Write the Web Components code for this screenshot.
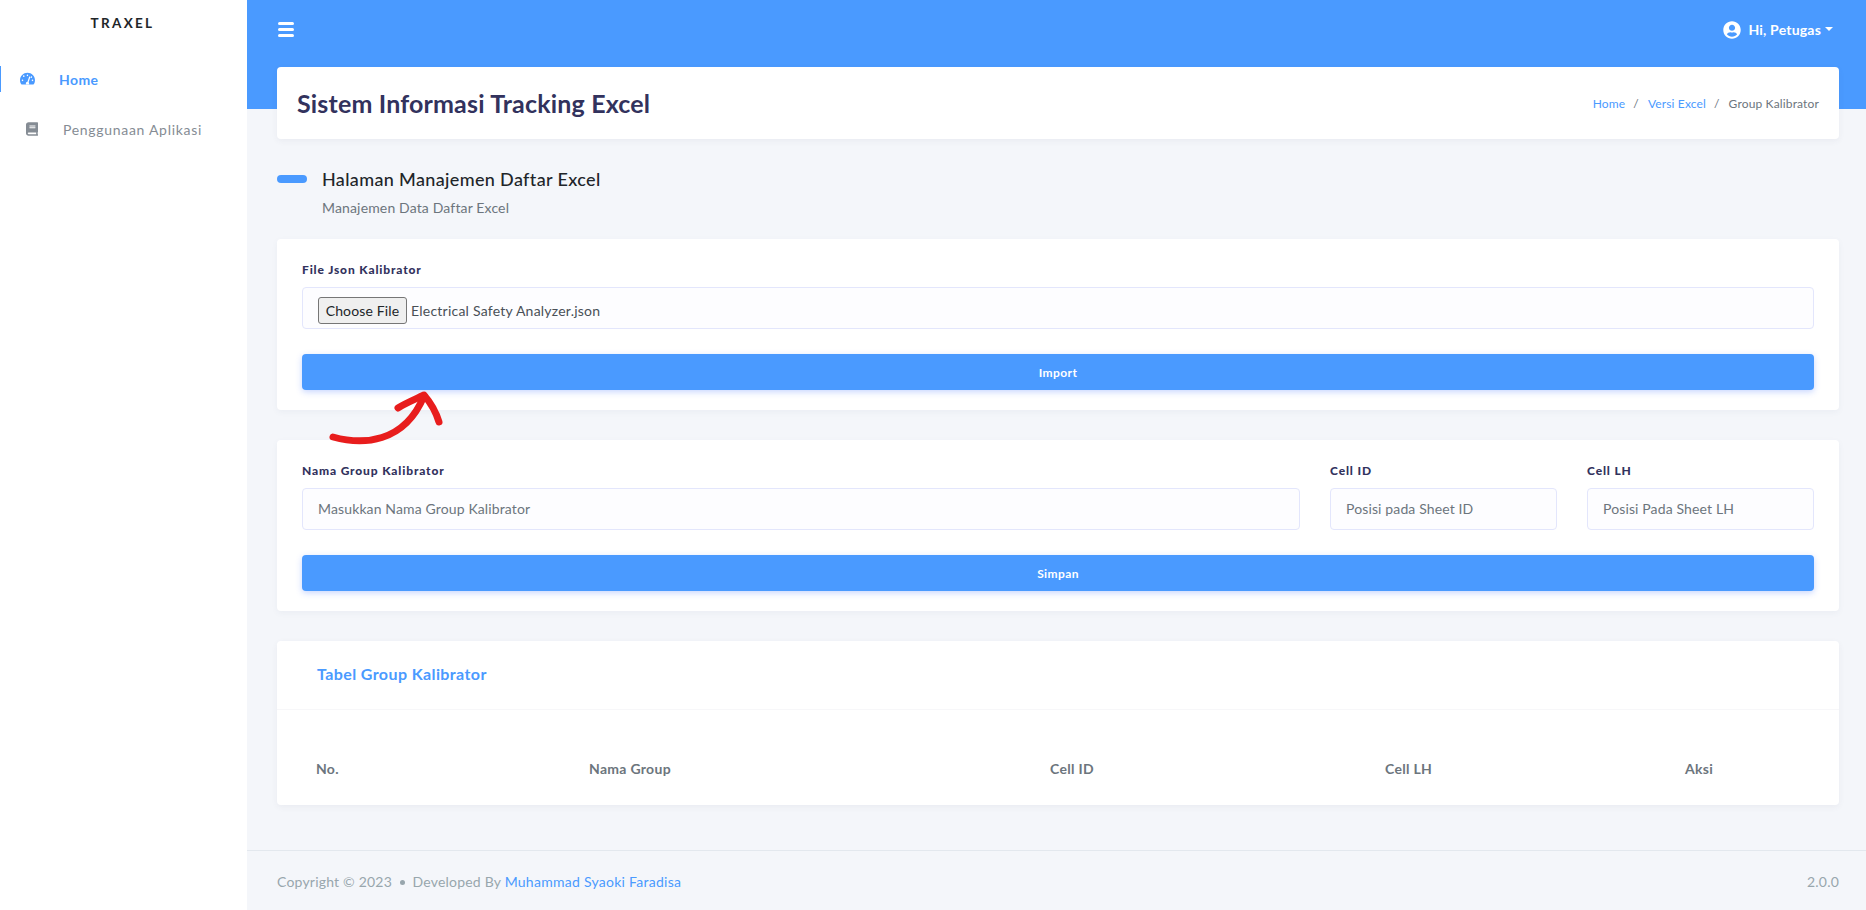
<!DOCTYPE html>
<html lang="id">
<head>
<meta charset="utf-8">
<title>Traxel</title>
<style>
  html, body { margin: 0; height: 100%; }
  body { background: #f4f6fa; font-family: "Lato", "Noto Sans", sans-serif; font-size: 14px; color: #6c757d; overflow: hidden; }
  #shell { display: flex; height: 910px; position: relative; }
  #main { flex: 1; display: flex; flex-direction: column; min-width: 0; }
  #content { flex: 1; padding: 0 27px 0 30px; display: flex; flex-direction: column; }
</style>
</head>
<body>
<div id="shell">
  <app-sidebar>
    <nav-item active label="Home" icon="gauge"></nav-item>
    <nav-item label="Penggunaan Aplikasi" icon="book"></nav-item>
  </app-sidebar>
  <div id="main">
    <app-topbar user="Hi, Petugas"></app-topbar>
    <div id="content">
      <page-title heading="Sistem Informasi Tracking Excel">
        <a slot="crumbs">Home</a>
        <a slot="crumbs">Versi Excel</a>
        <span slot="crumbs">Group Kalibrator</span>
      </page-title>
      <section-heading heading="Halaman Manajemen Daftar Excel" sub="Manajemen Data Daftar Excel"></section-heading>
      <ui-card>
        <form-field label="File Json Kalibrator" type="file" value="Electrical Safety Analyzer.json"></form-field>
        <ui-button>Import</ui-button>
      </ui-card>
      <ui-card class="second">
        <form-row>
          <form-field label="Nama Group Kalibrator" placeholder="Masukkan Nama Group Kalibrator"></form-field>
          <form-field label="Cell ID" placeholder="Posisi pada Sheet ID"></form-field>
          <form-field label="Cell LH" placeholder="Posisi Pada Sheet LH"></form-field>
        </form-row>
        <ui-button>Simpan</ui-button>
      </ui-card>
      <data-table heading="Tabel Group Kalibrator" columns="No.|Nama Group|Cell ID|Cell LH|Aksi"></data-table>
    </div>
    <app-footer version="2.0.0"></app-footer>
  </div>
  <hand-arrow></hand-arrow>
</div>

<script>
  const ICONS = {
    gauge: '<svg width="15" height="13.33" viewBox="0 0 576 512"><path fill="currentColor" d="M288 32C129 32 0 161 0 320c0 53 14 102 39 145 6 9 16 15 27 15h444c11 0 21-6 27-15 25-43 39-92 39-145C576 161 447 32 288 32zm0 64c15 0 26 10 31 23-2 3-4 6-5 9l-9 28c-5 3-11 4-17 4-18 0-32-14-32-32s14-32 32-32zM96 352c-18 0-32-14-32-32s14-32 32-32 32 14 32 32-14 32-32 32zm48-160c-18 0-32-14-32-32s14-32 32-32 32 14 32 32-14 32-32 32zm247 16-61 184c14 12 22 29 22 48 0 12-3 22-9 32H233c-6-10-9-20-9-32 0-35 28-64 63-64l61-184c4-13 18-19 30-15 13 4 20 18 16 31zm14 8 16-47c5-3 11-5 17-5 18 0 32 14 32 32s-14 32-32 32c-14 0-28-5-33-12zm75 136c-18 0-32-14-32-32s14-32 32-32 32 14 32 32-14 32-32 32z"/></svg>',
    book: '<svg width="12" height="14" viewBox="0 0 448 512"><path fill="currentColor" d="M448 360V24c0-13-11-24-24-24H96C43 0 0 43 0 96v320c0 53 43 96 96 96h328c13 0 24-11 24-24v-16c0-8-3-14-9-19-4-15-4-59 0-73 6-5 9-12 9-20zM128 134c0-3 3-6 6-6h212c3 0 6 3 6 6v20c0 3-3 6-6 6H134c-3 0-6-3-6-6v-20zm0 64c0-3 3-6 6-6h212c3 0 6 3 6 6v20c0 3-3 6-6 6H134c-3 0-6-3-6-6v-20zm253 250H96c-18 0-32-14-32-32s14-32 32-32h285c-2 17-2 47 0 64z"/></svg>',
    user: '<svg width="18" height="18" viewBox="0 0 496 512"><path fill="currentColor" d="M248 8C111 8 0 119 0 256s111 248 248 248 248-111 248-248S385 8 248 8zm0 96c49 0 88 39 88 88s-39 88-88 88-88-39-88-88 39-88 88-88zm0 344c-59 0-111-27-146-69 19-36 56-61 98-61 2 0 5 0 7 1 13 4 26 6 41 6s28-2 41-6c2-1 5-1 7-1 42 0 79 25 98 61-35 42-87 69-146 69z"/></svg>'
  };

  class AppSidebar extends HTMLElement {
    constructor() {
      super();
      this.attachShadow({mode:'open'});
      this.shadowRoot.innerHTML = `<style>
        :host { display: block; width: 247px; flex: none; background: #fff; }
        .brand { height: 46px; display: flex; align-items: center; justify-content: center; font-weight: 700; font-size: 13.5px; letter-spacing: 2.3px; color: #212529; padding-right: 2px; }
        nav { display: flex; flex-direction: column; gap: 24px; padding-top: 20px; }
      </style>
      <div class="brand">TRAXEL</div>
      <nav><slot></slot></nav>`;
    }
  }

  class NavItem extends HTMLElement {
    constructor() {
      super();
      this.attachShadow({mode:'open'});
      const active = this.hasAttribute('active');
      this.shadowRoot.innerHTML = `<style>
        :host { display: flex; align-items: center; height: 26px; color: #858c94; font-size: 14px; letter-spacing: .7px; border-left: 1px solid transparent; }
        :host([active]) { color: #4a9aff; border-left-color: #4a9aff; font-weight: 700; letter-spacing: .4px; }
        .ic { width: ${active ? 58 : 62}px; padding-left: ${active ? 19 : 25}px; box-sizing: border-box; display: flex; flex: none; }
      </style>
      <span class="ic">${ICONS[this.getAttribute('icon')]}</span><span>${this.getAttribute('label')}</span>`;
    }
  }

  class AppTopbar extends HTMLElement {
    constructor() {
      super();
      this.attachShadow({mode:'open'});
      this.shadowRoot.innerHTML = `<style>
        :host { display: flex; height: 109px; margin-bottom: -42px; background: #4a9aff; color: #fff; flex: none; box-sizing: border-box; padding: 0 33px 50px 31px; align-items: center; justify-content: space-between; }
        .bars { display: flex; flex-direction: column; gap: 3px; width: 16px; }
        .bars i { display: block; height: 3px; border-radius: 1.5px; background: #fff; }
        .user { display: flex; align-items: center; gap: 7px; font-weight: 700; font-size: 14px; letter-spacing: .2px; }
        .user svg { display: block; }
        .caret { width: 0; height: 0; border: 4px solid transparent; border-top-color: #fff; border-bottom: 0; margin-left: -3px; margin-top: -1px; }
      </style>
      <div class="bars"><i></i><i></i><i></i></div>
      <div class="user">${ICONS.user}<span>${this.getAttribute('user')}</span><span class="caret"></span></div>`;
    }
  }

  class PageTitle extends HTMLElement {
    constructor() {
      super();
      this.attachShadow({mode:'open'});
      this.shadowRoot.innerHTML = `<style>
        :host { display: flex; position: relative; height: 72px; flex: none; box-sizing: border-box; padding: 0 20px; align-items: center; justify-content: space-between; background: #fff; border-radius: 4px; box-shadow: 0 2px 6px rgba(60,70,110,.06); }
        h1 { margin: 0; font-size: 25px; font-weight: 700; color: #32325d; letter-spacing: .17px; }
        .crumbs { display: flex; font-size: 12px; color: #6c757d; letter-spacing: .15px; }
        ::slotted(a) { color: #4a9aff; }
        ::slotted(a)::after { content: "/"; color: #6c757d; padding: 0 9px 0 8px; }
      </style>
      <h1>${this.getAttribute('heading')}</h1>
      <div class="crumbs"><slot name="crumbs"></slot></div>`;
    }
  }

  class SectionHeading extends HTMLElement {
    constructor() {
      super();
      this.attachShadow({mode:'open'});
      this.shadowRoot.innerHTML = `<style>
        :host { display: grid; grid-template-columns: 30px 1fr; column-gap: 15px; align-items: center; flex: none; height: 100px; padding-top: 28px; box-sizing: border-box; align-content: start; row-gap: 7px; }
        .pill { height: 8px; border-radius: 4px; background: #4a9aff; }
        h2 { margin: 0; font-size: 18px; font-weight: 500; color: #212529; line-height: 24px; letter-spacing: .35px; }
        p { margin: 0; grid-column: 2; font-size: 14px; color: #6c757d; line-height: 20px; letter-spacing: .15px; }
      </style>
      <span class="pill"></span><h2>${this.getAttribute('heading')}</h2><p>${this.getAttribute('sub')}</p>`;
    }
  }

  class UiCard extends HTMLElement {
    constructor() {
      super();
      this.attachShadow({mode:'open'});
      this.shadowRoot.innerHTML = `<style>
        :host { display: flex; flex-direction: column; gap: 25px; flex: none; height: 171px; box-sizing: border-box; padding: 21px 25px 20px; background: #fff; border-radius: 4px; box-shadow: 0 2px 6px rgba(60,70,110,.05); }
        :host(.second) { margin-top: 30px; }
      </style><slot></slot>`;
    }
  }

  class FormRow extends HTMLElement {
    constructor() {
      super();
      this.attachShadow({mode:'open'});
      this.shadowRoot.innerHTML = `<style>
        :host { display: grid; grid-template-columns: 1fr 227px 227px; column-gap: 30px; }
      </style><slot></slot>`;
    }
  }

  class FormField extends HTMLElement {
    constructor() {
      super();
      this.attachShadow({mode:'open'});
      const isFile = this.getAttribute('type') === 'file';
      const body = isFile
        ? `<button type="button">Choose File</button><span class="val">${this.getAttribute('value')}</span>`
        : `<span class="ph">${this.getAttribute('placeholder')}</span>`;
      this.shadowRoot.innerHTML = `<style>
        :host { display: flex; flex-direction: column; gap: 7px; min-width: 0; }
        label { font-size: 12px; font-weight: 900; color: #32325d; line-height: 20px; letter-spacing: .85px; height: 20px; }
        .box { display: flex; align-items: center; height: 42px; box-sizing: border-box; padding: 0 15px; background: #fdfdff; border: 1px solid #e3e6fc; border-radius: 4px; font-size: 14px; letter-spacing: .13px; }
        .box.file { padding-top: 5px; }
        .ph { color: #6c757d; padding-bottom: 1px; }
        .val { color: #495057; margin-left: 4px; letter-spacing: .23px; }
        button { font: 14px "Lato", sans-serif; letter-spacing: .15px; color: #212529; height: 27px; width: 89px; padding: 0; background: #efefef; border: 1px solid #767676; border-radius: 3px; }
      </style>
      <label>${this.getAttribute('label')}</label>
      <div class="box${isFile ? ' file' : ''}">${body}</div>`;
    }
  }

  class UiButton extends HTMLElement {
    constructor() {
      super();
      this.attachShadow({mode:'open'});
      this.shadowRoot.innerHTML = `<style>
        :host { display: flex; height: 36px; align-items: center; justify-content: center; flex: none; background: #4a9aff; color: #fff; font-size: 12px; font-weight: 700; letter-spacing: .4px; border-radius: 4px; box-shadow: 0 2px 6px rgba(74,120,255,.3); }
      </style><slot></slot>`;
    }
  }

  class DataTable extends HTMLElement {
    constructor() {
      super();
      this.attachShadow({mode:'open'});
      const cols = this.getAttribute('columns').split('|');
      this.shadowRoot.innerHTML = `<style>
        :host { display: block; flex: none; margin-top: 30px; height: 164px; background: #fff; border-radius: 4px; box-shadow: 0 2px 6px rgba(60,70,110,.06); }
        .head { height: 69px; box-sizing: border-box; padding-left: 40px; display: flex; align-items: center; border-bottom: 1px solid #f7f7f9; font-size: 16px; font-weight: 700; letter-spacing: .4px; color: #4a9aff; padding-bottom: 4px; }
        .row { display: grid; grid-template-columns: 273px 461px 335px 300px 1fr; padding: 49px 0 0 39px; font-size: 14px; font-weight: 700; letter-spacing: .3px; color: #6c757d; line-height: 20px; }
      </style>
      <div class="head">${this.getAttribute('heading')}</div>
      <div class="row">${cols.map(c => `<span>${c}</span>`).join('')}</div>`;
    }
  }

  class AppFooter extends HTMLElement {
    constructor() {
      super();
      this.attachShadow({mode:'open'});
      this.shadowRoot.innerHTML = `<style>
        :host { display: flex; height: 60px; flex: none; box-sizing: border-box; padding: 2px 27px 0 30px; align-items: center; justify-content: space-between; border-top: 1px solid #e3e8ee; color: #98a6ad; font-size: 14px; letter-spacing: .2px; }
        a { color: #4a9aff; letter-spacing: .27px; }
        .dot { display: inline-block; width: 5px; height: 5px; border-radius: 50%; background: #98a6ad; margin: 0 4px 2px 4px; }
      </style>
      <span>Copyright © 2023 <span class="dot"></span> Developed By <a>Muhammad Syaoki Faradisa</a></span>
      <span>${this.getAttribute('version')}</span>`;
    }
  }

  // arrow is drawn on top of the screenshot, sits over the first card
  class HandArrow extends HTMLElement {
    constructor() {
      super();
      this.attachShadow({mode:'open'});
      this.shadowRoot.innerHTML = `<style>
        :host { position: absolute; left: 325px; top: 385px; width: 125px; height: 65px; pointer-events: none; }
        svg { display: block; }
      </style>
      <svg width="125" height="65" viewBox="325 385 125 65" fill="none" stroke="#e81d1d" stroke-width="7" stroke-linecap="round" stroke-linejoin="round">
        <path d="M333 437C362 445 404 444 424 396"/>
        <path d="M398 408C406 403 416 399 424 395C430 402 436 412 439 422"/>
      </svg>`;
    }
  }

  customElements.define('app-sidebar', AppSidebar);
  customElements.define('nav-item', NavItem);
  customElements.define('app-topbar', AppTopbar);
  customElements.define('page-title', PageTitle);
  customElements.define('section-heading', SectionHeading);
  customElements.define('ui-card', UiCard);
  customElements.define('form-row', FormRow);
  customElements.define('form-field', FormField);
  customElements.define('ui-button', UiButton);
  customElements.define('data-table', DataTable);
  customElements.define('app-footer', AppFooter);
  customElements.define('hand-arrow', HandArrow);
</script>
</body>
</html>
